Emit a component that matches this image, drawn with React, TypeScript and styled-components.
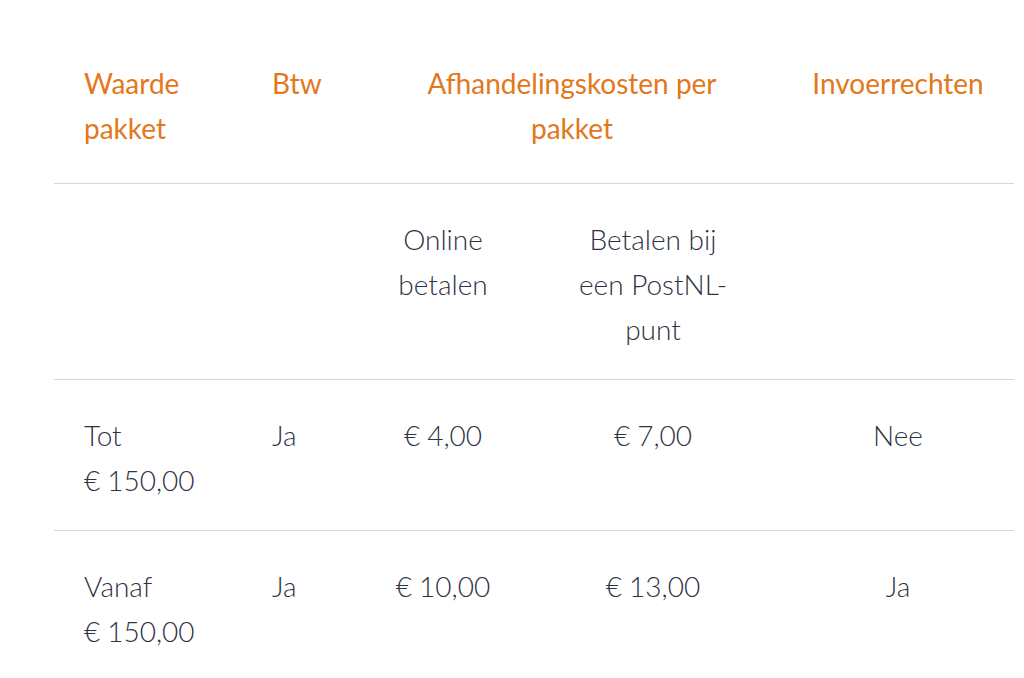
import React from "react";
import styled, { createGlobalStyle } from "styled-components";

const Global = createGlobalStyle`
  html, body { margin: 0; padding: 0; background: #fff; }
  body { font-family: Lato, "Noto Sans", Arial, sans-serif; }
`;

const Page = styled.div`
  padding: 33px 10px 0 54px;
`;

const Table = styled.table`
  width: 960px;
  border-collapse: collapse;
  table-layout: fixed;
  font-size: 28px;
  line-height: 45px;
`;

const Head = styled.th<{ $align?: "left" | "center" }>`
  color: #e3771c;
  font-weight: 400;
  text-align: ${(p) => p.$align ?? "left"};
  vertical-align: top;
  padding: 28px 30px 32px;
  border-bottom: 1px solid #d4d5da;
`;

const Cell = styled.td<{ $align?: "left" | "center"; $inset?: number }>`
  color: #2e3344;
  font-weight: 300;
  text-align: ${(p) => p.$align ?? "left"};
  vertical-align: top;
  padding: 33px ${(p) => p.$inset ?? 30}px 27px;
  border-bottom: 1px solid #d4d5da;
`;

const Row = styled.tr<{ $last?: boolean }>`
  ${(p) => (p.$last ? "td { border-bottom: none; }" : "")}
`;

const E = "€\u202f";
const rows = [
  [`Tot ${E}150,00`, "Ja", `${E}4,00`, `${E}7,00`, "Nee"],
  [`Vanaf ${E}150,00`, "Ja", `${E}10,00`, `${E}13,00`, "Ja"],
];

export default function App() {
  return (
    <>
      <Global />
      <Page>
        <Table>
          <colgroup>
            <col style={{ width: 188 }} />
            <col style={{ width: 120 }} />
            <col style={{ width: 162 }} />
            <col style={{ width: 258 }} />
            <col style={{ width: 232 }} />
          </colgroup>
          <thead>
            <tr>
              <Head>Waarde pakket</Head>
              <Head>Btw</Head>
              <Head colSpan={2} $align="center">Afhandelingskosten per pakket</Head>
              <Head $align="center">Invoerrechten</Head>
            </tr>
          </thead>
          <tbody>
            <tr>
              <Cell />
              <Cell />
              <Cell $align="center">Online betalen</Cell>
              <Cell $align="center" $inset={46}>Betalen bij een PostNL-punt</Cell>
              <Cell />
            </tr>
            {rows.map((r, i) => (
              <Row key={i} $last={i === rows.length - 1}>
                <Cell>{r[0]}</Cell>
                <Cell>{r[1]}</Cell>
                <Cell $align="center">{r[2]}</Cell>
                <Cell $align="center" $inset={46}>{r[3]}</Cell>
                <Cell $align="center">{r[4]}</Cell>
              </Row>
            ))}
          </tbody>
        </Table>
      </Page>
    </>
  );
}
